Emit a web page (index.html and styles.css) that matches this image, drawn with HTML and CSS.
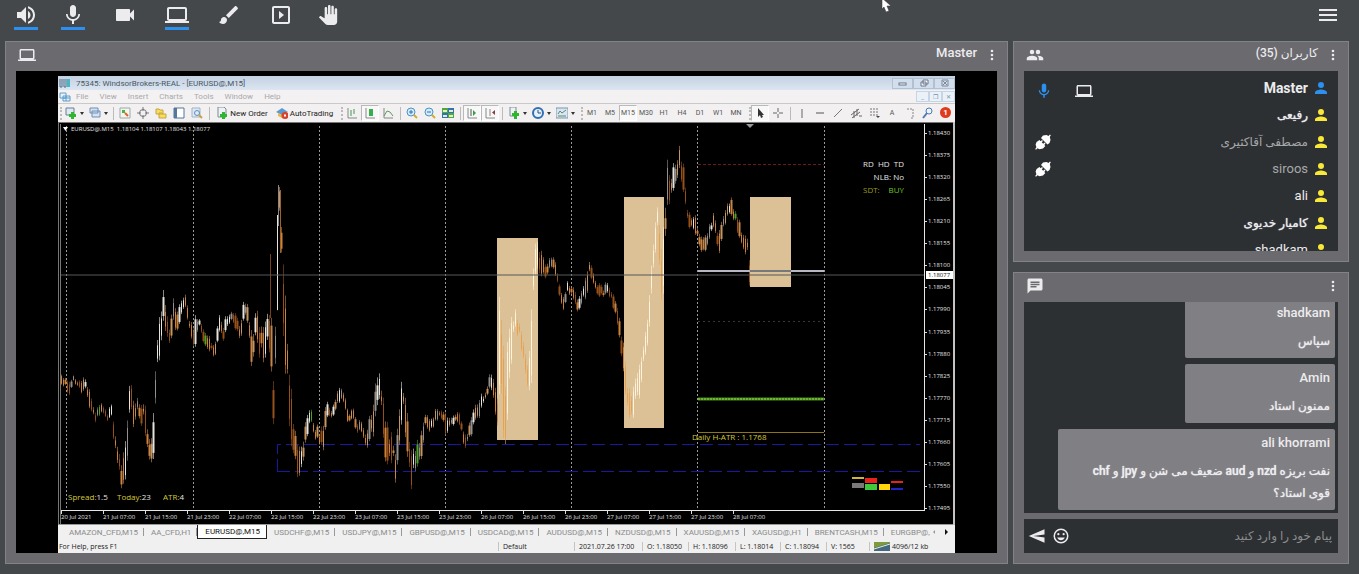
FILE: index.html
```html
<!DOCTYPE html>
<html lang="fa">
<head>
<meta charset="utf-8">
<meta name="viewport" content="width=device-width, initial-scale=1.0">
<title>کلاس آنلاین</title>
<link rel="stylesheet" href="styles.css">
</head>
<body>

<svg class="sprite" aria-hidden="true">
  <symbol id="i-volume" viewBox="0 0 24 24"><path d="M3 9v6h4l5 5V4L7 9H3zm13.500 3c0-1.770-1.020-3.290-2.500-4.030v8.050c1.480-.73 2.500-2.250 2.500-4.020zM14 3.230v2.060c2.890.86 5 3.540 5 6.710s-2.110 5.850-5 6.710v2.060c4.010-.91 7-4.490 7-8.770s-2.990-7.860-7-8.770z"/></symbol>
  <symbol id="i-mic" viewBox="0 0 24 24"><path d="M12 14c1.660 0 3-1.340 3-3V5c0-1.660-1.340-3-3-3S9 3.340 9 5v6c0 1.660 1.340 3 3 3zm5.300-3c0 3-2.540 5.100-5.300 5.100S6.700 14 6.700 11H5c0 3.410 2.720 6.230 6 6.720V21h2v-3.280c3.280-.48 6-3.300 6-6.720h-1.700z"/></symbol>
  <symbol id="i-camera" viewBox="0 0 24 24"><path d="M17 10.500V7c0-.55-.45-1-1-1H4c-.55 0-1 .45-1 1v10c0 .55.45 1 1 1h12c.55 0 1-.45 1-1v-3.500l4 4v-11l-4 4z"/></symbol>
  <symbol id="i-laptop" viewBox="0 0 24 24"><path d="M20 18c1.100 0 2-.9 2-2V6c0-1.100-.9-2-2-2H4c-1.100 0-2 .9-2 2v10c0 1.100.9 2 2 2H0v2h24v-2h-4zM4 6h16v10H4V6z"/></symbol>
  <symbol id="i-brush" viewBox="0 0 24 24"><path d="M7 14c-1.660 0-3 1.340-3 3 0 1.310-1.160 2-2 2 .92 1.220 2.490 2 4 2 2.210 0 4-1.790 4-4 0-1.660-1.340-3-3-3zm13.710-9.370l-1.340-1.340c-.39-.39-1.020-.39-1.410 0L9 12.250 11.750 15l8.960-8.960c.39-.39.39-1.020 0-1.410z"/></symbol>
  <symbol id="i-play" viewBox="0 0 24 24"><path d="M10 8v8l5-4-5-4zm9-5H5c-1.100 0-2 .9-2 2v14c0 1.100.9 2 2 2h14c1.100 0 2-.9 2-2V5c0-1.100-.9-2-2-2zm0 16H5V5h14v14z"/></symbol>
  <symbol id="i-hand" viewBox="0 0 24 24"><path d="M23 5.500V20c0 2.200-1.800 4-4 4h-7.300c-1.080 0-2.100-.43-2.850-1.190L1 14.830s1.260-1.230 1.300-1.250c.22-.19.49-.29.79-.29.22 0 .42.06.6.16.04.01 4.310 2.460 4.310 2.460V4c0-.83.67-1.500 1.500-1.500S11 3.170 11 4v7h1V1.500c0-.83.67-1.500 1.500-1.500S15 .67 15 1.500V11h1V2.500c0-.83.67-1.500 1.500-1.500s1.500.67 1.500 1.500V11h1V5.500c0-.83.67-1.500 1.500-1.500s1.500.67 1.500 1.500z"/></symbol>
  <symbol id="i-menu" viewBox="0 0 24 24"><path d="M3 18h18v-2H3v2zm0-5h18v-2H3v2zm0-7v2h18V6H3z"/></symbol>
  <symbol id="i-more" viewBox="0 0 24 24"><path d="M12 8a2 2 0 1 0 0-4 2 2 0 0 0 0 4zm0 2a2 2 0 1 0 0 4 2 2 0 0 0 0-4zm0 6a2 2 0 1 0 0 4 2 2 0 0 0 0-4z"/></symbol>
  <symbol id="i-people" viewBox="0 0 24 24"><path d="M16 11a3 3 0 1 0 0-6 3 3 0 0 0 0 6zM8 11a3 3 0 1 0 0-6 3 3 0 0 0 0 6zm0 2c-2.330 0-7 1.170-7 3.500V19h14v-2.500c0-2.330-4.670-3.500-7-3.500zm8 0c-.29 0-.62.02-.97.05 1.160.84 1.970 1.970 1.970 3.450V19h6v-2.500c0-2.330-4.670-3.500-7-3.500z"/></symbol>
  <symbol id="i-chat" viewBox="0 0 24 24"><path d="M20 2H4c-1.100 0-2 .9-2 2v18l4-4h14c1.100 0 2-.9 2-2V4c0-1.100-.9-2-2-2zM6 9h12v2H6V9zm8 5H6v-2h8v2zm4-6H6V6h12v2z"/></symbol>
  <symbol id="i-person" viewBox="4 4 16 16"><path d="M12 12a4 4 0 1 0 0-8 4 4 0 0 0 0 8zm0 2c-2.670 0-8 1.340-8 4v2h16v-2c0-2.660-5.330-4-8-4z"/></symbol>
  <symbol id="i-send" viewBox="0 0 24 24"><path d="M22 21L1 12l21-9v7L7 12l15 2z"/></symbol>
  <symbol id="i-smile" viewBox="0 0 24 24"><path d="M12 2a10 10 0 1 0 0 20 10 10 0 0 0 0-20zm0 18a8 8 0 1 1 0-16 8 8 0 0 1 0 16zm3.500-9a1.500 1.500 0 1 0 0-3 1.500 1.500 0 0 0 0 3zm-7 0a1.500 1.500 0 1 0 0-3 1.500 1.500 0 0 0 0 3zm3.500 6.500c2.330 0 4.310-1.460 5.110-3.500H6.890c.8 2.040 2.780 3.500 5.110 3.500z"/></symbol>
  <symbol id="i-plug" viewBox="0 0 16 16"><path d="M6 4l2-2.500L11.500 1l2 1L15 .5l.8.8L14.800 3l.7 3-1 3-2 1.500zM4.500 6l1.200 1.200L7 6l1 1-1.300 1.300 1.500 1.500L9.500 8.500l1 1L9.300 11l1 1L8 14.500l-3.500.7-2-.9L1 15.700l-.8-.8 1.200-1.600-.8-2.800 1-2.500z"/></symbol>
</svg>

<header class="topbar">
  <div class="tools">
    <div class="pair">
      <button class="tool on" aria-label="صدا"><svg><use href="#i-volume"/></svg></button>
      <button class="tool on" aria-label="میکروفون"><svg><use href="#i-mic"/></svg></button>
    </div>
    <button class="tool" aria-label="دوربین"><svg><use href="#i-camera"/></svg></button>
    <button class="tool on" aria-label="اشتراک صفحه"><svg><use href="#i-laptop"/></svg></button>
    <button class="tool" aria-label="تخته"><svg><use href="#i-brush"/></svg></button>
    <div class="pair">
      <button class="tool" aria-label="پخش"><svg><use href="#i-play"/></svg></button>
      <button class="tool" aria-label="اجازه صحبت"><svg class="hand"><use href="#i-hand"/></svg></button>
    </div>
  </div>
  <button class="tool" aria-label="منو"><svg><use href="#i-menu"/></svg></button>
</header>

<main class="room">
  <section class="panel">
    <div class="panel-head">
      <svg class="head-icon"><use href="#i-laptop"/></svg>
      <h2>Master</h2>
      <button class="more" aria-label="گزینه‌ها"><svg><use href="#i-more"/></svg></button>
    </div>
    <div class="stage">
      <div class="mt" lang="en">
        <div class="mt-title">
          <svg class="mt-logo" viewBox="0 0 12 10"><path d="M1 1v8h2V1M5 1v8h2V1" fill="none" stroke="#4d6f86"/><path d="M8 1h3v8H8z" fill="#46b7c4"/></svg>
          <span>75345: WindsorBrokers-REAL - [EURUSD@,M15]</span>
          <div class="win-btns">
            <button aria-label="Minimize"><svg viewBox="0 0 12 8"><rect x="2" y="4" width="7" height="2" fill="#fff" stroke="#66758a"/></svg></button>
            <button aria-label="Restore"><svg viewBox="0 0 12 8"><path d="M5 1h5v4H5zM3 3h5v4H3z" fill="#fff" stroke="#66758a"/></svg></button>
            <button aria-label="Close"><svg viewBox="0 0 12 8"><path d="M3 1h6v6H3zM4 2l4 4M8 2L4 6" fill="none" stroke="#7d8898"/></svg></button>
          </div>
        </div>
        <div class="mt-menu">
          <svg class="mt-logo" viewBox="0 0 12 10"><path d="M1 1h6v5H1zM4 4h7v5H4zM4 6h7M7 4v5" fill="#e8f2fb" stroke="#5f9ccb"/></svg>
          <a href="#">File</a><a href="#">View</a><a href="#">Insert</a><a href="#">Charts</a><a href="#">Tools</a><a href="#">Window</a><a href="#">Help</a>
          <div class="doc-btns"><button aria-label="Minimize window">_</button><button aria-label="Restore window">❐</button><button aria-label="Close window">✕</button></div>
        </div>
        <div class="mt-bar">
          <i class="grip"></i>
          <button class="tb drop" aria-label="New chart"><svg viewBox="0 0 12 12"><path d="M1 1h8v7H1z" fill="#dfe9f2" stroke="#6a8099"/><path d="M6 5h3v2h2v3H9v2H6v-2H4V7h2z" fill="#2fb52f"/></svg></button>
          <button class="tb drop" aria-label="Profiles"><svg viewBox="0 0 12 12"><path d="M1 1h8v5H1zM3 4h8v6H3z" fill="#d5e3f1" stroke="#6f8fb5"/></svg></button>
          <i class="sep"></i>
          <button class="tb" aria-label="Market watch"><svg viewBox="0 0 12 12"><path d="M1 1h10v10H1z" fill="#f4f6e8" stroke="#9aa7b5"/><path d="M3 3h3v3H3z" fill="#4caf50"/><path d="M6 6l3 3" stroke="#e2622a" stroke-width="2"/></svg></button>
          <button class="tb" aria-label="Data window"><svg viewBox="0 0 12 12"><circle cx="6" cy="6" r="3.500" fill="none" stroke="#777"/><path d="M6 0v4M6 8v4M0 6h4M8 6h4" stroke="#777"/></svg></button>
          <button class="tb" aria-label="Navigator"><svg viewBox="0 0 12 12"><path d="M1 2h3l1 1h3v4H1zM4 6h3l1 1h3v4H4z" fill="#f6dc60" stroke="#c9a63c"/></svg></button>
          <button class="tb" aria-label="Terminal"><svg viewBox="0 0 12 12"><path d="M1 1h10v10H1z" fill="#fff" stroke="#55779c"/><path d="M1 1h3v10H1z" fill="#55779c"/></svg></button>
          <button class="tb" aria-label="Strategy tester"><svg viewBox="0 0 12 12"><path d="M1 1h8v9H1z" fill="#dfe8f1" stroke="#9eb3c9"/><circle cx="6" cy="6" r="2.500" fill="none" stroke="#5b8fc4"/><path d="M8 8l3 3" stroke="#caa23a" stroke-width="2"/></svg></button>
          <i class="sep"></i>
          <button class="tb label order"><svg viewBox="0 0 12 12"><path d="M2 0h6l2 2v8H2z" fill="#eef2f5" stroke="#7d8b98"/><path d="M6 5h3v2h2v3H9v2H6v-2H4V7h2z" fill="#2fb52f"/></svg>New Order</button>
          <button class="tb label auto"><svg viewBox="0 0 12 12"><path d="M0 5l6-4 6 4-6 3z" fill="#5c9ad2"/><path d="M2 6l4 2v3L2 9z" fill="#e8b94a"/><circle cx="9" cy="8.500" r="3.500" fill="#d8432b"/><path d="M8 7.500h2v2H8z" fill="#fff"/></svg>AutoTrading</button>
          <i class="grip"></i>
          <button class="tb" aria-label="Bar chart"><svg viewBox="0 0 12 12"><path d="M2 1v10h9" fill="none" stroke="#888"/><path d="M5 3v6M8 2v5" stroke="#3a9a50"/></svg></button>
          <button class="tb pressed" aria-label="Candlesticks"><svg viewBox="0 0 12 12"><path d="M2 1v10h9" fill="none" stroke="#888"/><path d="M5 2h4v7H5z" fill="#35b04a"/></svg></button>
          <button class="tb" aria-label="Line chart"><svg viewBox="0 0 12 12"><path d="M2 1v10h9" fill="none" stroke="#888"/><path d="M2 9l3-5 3 1 3 4" fill="none" stroke="#5a9a60"/></svg></button>
          <i class="sep"></i>
          <button class="tb" aria-label="Zoom in"><svg viewBox="0 0 12 12"><circle cx="5" cy="5" r="4" fill="#d4ebfa" stroke="#4a93c9"/><path d="M3 5h4M5 3v4" stroke="#2c72ad"/><path d="M8 8l3 3" stroke="#d6aa38" stroke-width="2"/></svg></button>
          <button class="tb" aria-label="Zoom out"><svg viewBox="0 0 12 12"><circle cx="5" cy="5" r="4" fill="#d4ebfa" stroke="#4a93c9"/><path d="M3 5h4" stroke="#2c72ad"/><path d="M8 8l3 3" stroke="#d6aa38" stroke-width="2"/></svg></button>
          <button class="tb" aria-label="Tile windows"><svg viewBox="0 0 12 12"><path d="M0 1h6v5H0zM6 6h6v5H6z" fill="#4fa83d"/><path d="M6 1h6v5H6zM0 6h6v5H0z" fill="#3470b5"/><path d="M1 3h4v2H1zM7 3h4v2H7zM1 8h4v2H1zM7 8h4v2H7z" fill="#e6edc9"/></svg></button>
          <i class="sep"></i>
          <button class="tb pressed" aria-label="Auto scroll"><svg viewBox="0 0 12 12"><path d="M2 1v10h9" fill="none" stroke="#888"/><path d="M5 2v7" stroke="#555"/><path d="M7 3l3 3-3 3z" fill="#35a04a"/></svg></button>
          <button class="tb pressed" aria-label="Chart shift"><svg viewBox="0 0 12 12"><path d="M2 1v10h9M6 2v7" fill="none" stroke="#888"/><path d="M11 3L8 5.500 11 8z" fill="#8a4040"/></svg></button>
          <i class="sep"></i>
          <button class="tb drop" aria-label="Indicators"><svg viewBox="0 0 12 12"><path d="M2 0h6v9H2z" fill="#eef2f5" stroke="#7d8b98"/><path d="M6 4h3v2h2v3H9v3H6V9H4V6h2z" fill="#2fb52f"/></svg></button>
          <button class="tb drop" aria-label="Periods"><svg viewBox="0 0 12 12"><circle cx="6" cy="6" r="5" fill="#e4f1fb" stroke="#2f6fb3" stroke-width="2"/><path d="M6 3v3h3" fill="none" stroke="#2f4f73"/></svg></button>
          <button class="tb drop" aria-label="Templates"><svg viewBox="0 0 12 12"><path d="M0 1h12v10H0z" fill="#d9e6f2" stroke="#7a95b3"/><path d="M2 7l2-3 2 2 4-3M2 9h8" fill="none" stroke="#5c8a6c"/></svg></button>
          <i class="grip"></i>
          <button class="tb tf">M1</button>
          <button class="tb tf">M5</button>
          <button class="tb tf pressed">M15</button>
          <button class="tb tf">M30</button>
          <button class="tb tf">H1</button>
          <button class="tb tf">H4</button>
          <button class="tb tf">D1</button>
          <button class="tb tf">W1</button>
          <button class="tb tf">MN</button>
          <i class="grip"></i>
          <button class="tb pressed" aria-label="Cursor"><svg viewBox="0 0 12 12"><path d="M4 1v9l2-2 1 3 2-1-1-2h2z" fill="#333"/></svg></button>
          <button class="tb" aria-label="Crosshair"><svg viewBox="0 0 12 12"><path d="M6 1v4M6 7v4M1 6h4M7 6h4" stroke="#666"/></svg></button>
          <i class="sep"></i>
          <button class="tb" aria-label="Vertical line"><svg viewBox="0 0 12 12"><path d="M6 2v9" stroke="#666"/></svg></button>
          <button class="tb" aria-label="Horizontal line"><svg viewBox="0 0 12 12"><path d="M2 6h8" stroke="#555"/></svg></button>
          <button class="tb" aria-label="Trendline"><svg viewBox="0 0 12 12"><path d="M2 10l8-8" stroke="#777"/></svg></button>
          <button class="tb" aria-label="Channel"><svg viewBox="0 0 12 12"><path d="M1 8l8-6M2 11l8-6M4 4v7M7 2v7M9 9h3" stroke="#666"/></svg></button>
          <button class="tb" aria-label="Fibonacci"><svg viewBox="0 0 12 12"><path d="M2 2h9M2 5h9M2 8h9" stroke="#777" stroke-dasharray="2 1"/><path d="M8 9h4l-2 2z" fill="#444"/></svg></button>
          <button class="tb tf">A</button>
          <button class="tb" aria-label="Text label"><svg viewBox="0 0 12 12"><path d="M3 2h6v9H6" fill="none" stroke="#888" stroke-dasharray="2 1"/></svg></button>
          <button class="tb" aria-label="Search"><svg viewBox="0 0 12 12"><circle cx="7" cy="4" r="3" fill="#eef4fb" stroke="#4a78b8"/><path d="M5 6l-4 5" stroke="#4a78b8" stroke-width="2"/></svg></button>
          <span class="alert">1</span>
        </div>

        <svg class="chart" id="chart" viewBox="58 122 897 403">
          <rect x="58" y="122" width="897" height="403" fill="#000"/>
          <path d="M58 122.500H955M58.500 122V525M60.500 124V525" stroke="#777" fill="none"/>
          <path d="M58 524.500H955" stroke="#999"/>
          <path d="M954 122V525" stroke="#c4c4c4" stroke-width="2"/>
          <g class="vgrid"><path d="M66.500 126V510M193.500 126V510M319.500 126V510M445.500 126V510M571.500 126V510M697.500 126V510M824.500 126V510"/></g>
          <g class="zones">
            <rect x="497" y="238" width="41" height="202"/>
            <rect x="624" y="197" width="40" height="231"/>
            <rect x="750" y="197" width="41" height="90"/>
          </g>
          <path d="M277.500 472V444.500H920" fill="none" stroke="#1818a0" stroke-dasharray="13 5"/>
          <path d="M277 471.500H920" stroke="#1818a0" stroke-dasharray="13 5"/>
          <g id="candles"></g>
          <path d="M698 164.500H824" stroke="#6a1a1a" stroke-dasharray="3 2"/>
          <path d="M698 321.500H824" stroke="#3a3530" stroke-dasharray="2 3"/>
          <path d="M61 275H925" stroke="#55585a"/>
          <path d="M698 271H824" stroke="#b9b6c4" stroke-width="2"/>
          <path d="M750 271H791" stroke="#77777e" stroke-width="2"/>
          <path d="M698 399H824" stroke="#3f8a18" stroke-width="3"/>
          <path d="M698 399H824" stroke="#a5d858" stroke-dasharray="2 1"/>
          <path d="M698 432.500H824" stroke="#8c7614"/>
          <path d="M61 510.500H925M924.500 124V511" stroke="#e6e6e6" fill="none"/>
          <path d="M746 124h8l-4 4z" fill="#999"/>
          <path d="M63 127h5l-2.500 4z" fill="#fff"/>
          <text class="caption" x="71" y="131">EURUSD@.M15&#160; 1.18104 1.18107 1.18043 1.18077</text>
          <text class="note yellow" x="692" y="440">Daily H-ATR : 1.1768</text>
          <text class="note" x="904" y="167" text-anchor="end">RD&#160; HD&#160; TD</text>
          <text class="note" x="904" y="180" text-anchor="end">NLB: No</text>
          <text class="note olive" x="863" y="193">SDT:</text>
          <text class="note green" x="904" y="193" text-anchor="end">BUY</text>
          <text class="note" x="68" y="500"><tspan class="yellow">Spread:</tspan>1.5</text>
          <text class="note" x="117" y="500"><tspan class="yellow">Today:</tspan>23</text>
          <text class="note" x="163" y="500"><tspan class="yellow">ATR:</tspan>4</text>
          <g id="prices"></g>
          <g id="dates"></g>
          <rect x="926" y="271" width="27" height="8" fill="#fff"/>
          <text class="scale now" x="928" y="277">1.18077</text>
          <path d="M852 477h12v2h-12z" fill="#cdb53a"/>
          <path d="M852 483h12v5h-12z" fill="#7b777b"/>
          <path d="M865 478h12v5h-12zM891 481h12v2h-12z" fill="#e8231c"/>
          <path d="M865 484h12v6h-12z" fill="#3fc93c"/>
          <path d="M879 484h11v6h-11z" fill="#ffd60a"/>
          <path d="M891 488h12v2h-12z" fill="#2222cc"/>
        </svg>

        <nav class="mt-tabs">
          <button>AMAZON_CFD,M15</button>
          <button>AA_CFD,H1</button>
          <button class="active">EURUSD@,M15</button>
          <button>USDCHF@,M15</button>
          <button>USDJPY@,M15</button>
          <button>GBPUSD@,M15</button>
          <button>USDCAD@,M15</button>
          <button>AUDUSD@,M15</button>
          <button>NZDUSD@,M15</button>
          <button>XAUUSD@,M15</button>
          <button>XAGUSD@,H1</button>
          <button>BRENTCASH,M15</button>
          <button class="last">EURGBP@,</button>
          <span class="scroll"><svg viewBox="0 0 20 6"><path d="M4 1v4L2 3z" fill="#999"/><path d="M14 0v6l3-3z" fill="#111"/></svg></span>
        </nav>
        <footer class="mt-status">
          <span>For Help, press F1</span>
          <span>Default</span>
          <span>2021.07.26 17:00</span>
          <span>O: 1.18050</span>
          <span>H: 1.18096</span>
          <span>L: 1.18014</span>
          <span>C: 1.18094</span>
          <span>V: 1565</span>
          <span class="traffic"><svg viewBox="0 0 16 9"><path d="M0 0h16v9H0z" fill="#7d9a3f"/><path d="M0 9V6l16-5v8z" fill="#44687f"/><path d="M0 7l16-5" stroke="#e8efe0"/></svg>4096/12 kb</span>
        </footer>
      </div>
    </div>
  </section>

  <aside class="side">
    <section class="panel">
      <div class="panel-head">
        <svg class="head-icon"><use href="#i-people"/></svg>
        <h2 class="fa" dir="rtl">کاربران (35)</h2>
        <button class="more" aria-label="گزینه‌ها"><svg><use href="#i-more"/></svg></button>
      </div>
      <ul class="users">
        <li class="host"><svg class="mic"><use href="#i-mic"/></svg><svg class="share"><use href="#i-laptop"/></svg><b>Master</b><svg class="who"><use href="#i-person"/></svg></li>
        <li><span class="fa strong">رفیعی</span><svg class="who"><use href="#i-person"/></svg></li>
        <li class="off"><svg class="plug"><use href="#i-plug"/></svg><span class="fa">مصطفی آقاکثیری</span><svg class="who"><use href="#i-person"/></svg></li>
        <li class="off"><svg class="plug"><use href="#i-plug"/></svg><span>siroos</span><svg class="who"><use href="#i-person"/></svg></li>
        <li><span>ali</span><svg class="who"><use href="#i-person"/></svg></li>
        <li><span class="fa strong">کامیار خدیوی</span><svg class="who"><use href="#i-person"/></svg></li>
        <li><span>shadkam</span><svg class="who"><use href="#i-person"/></svg></li>
      </ul>
    </section>

    <section class="panel chat">
      <div class="panel-head">
        <svg class="head-icon"><use href="#i-chat"/></svg>
        <button class="more" aria-label="گزینه‌ها"><svg><use href="#i-more"/></svg></button>
      </div>
      <div class="messages">
        <article><h3>shadkam</h3><p>سپاس</p></article>
        <article><h3>Amin</h3><p>ممنون استاد</p></article>
        <article><h3>ali khorrami</h3><p>نفت بریزه nzd و aud ضعیف می شن و jpy و chf قوی استاد؟</p></article>
      </div>
      <form class="compose">
        <button type="button" aria-label="ارسال"><svg><use href="#i-send"/></svg></button>
        <button type="button" aria-label="شکلک"><svg><use href="#i-smile"/></svg></button>
        <input type="text" dir="rtl" aria-label="پیام" placeholder="پیام خود را وارد کنید">
      </form>
    </section>
  </aside>
</main>

<svg class="pointer" viewBox="0 0 10 14" aria-hidden="true"><path d="M1 0v11l2-2 2 5 3-1-2-5h4z" fill="#fff" stroke="#333" stroke-width=".5"/></svg>

<script src="script.js"></script>
</body>
</html>
```
FILE: styles.css
```css
:root {
  --bg: #45484b;
  --panel: #6b6a6f;
  --line: #828388;
  --dark: #2d3033;
  --bubble: #807f84;
  --text: #ececee;
  --blue: #2b90f0;
  --yellow: #f8e837;
}
* {
  box-sizing: border-box;
}
body {
  margin: 0;
  height: 100vh;
  display: flex;
  flex-direction: column;
  overflow: hidden;
  background: var(--bg);
  color: var(--text);
  font-family: Roboto, "DejaVu Sans", sans-serif;
  font-size: 13px;
}
button {
  border: 0;
  padding: 0;
  background: none;
  color: inherit;
  font: inherit;
  cursor: pointer;
}
svg {
  display: block;
  flex-shrink: 0;
  fill: currentColor;
}
.sprite {
  display: none;
}

/* top bar */
.topbar {
  display: flex;
  justify-content: space-between;
  height: 41px;
  padding: 3px 19px 0 14px;
}
.tools {
  display: flex;
  gap: 28px;
}
.pair {
  display: flex;
  gap: 23px;
}
.tool {
  width: 24px;
  height: 27px;
  border-bottom: 3px solid transparent;
}
.tool.on {
  border-color: var(--blue);
}
.tool svg {
  width: 24px;
  height: 24px;
}
.tool svg.hand {
  padding: 2px;
}

/* panels */
.room {
  flex: 1;
  min-height: 0;
  display: grid;
  grid-template-columns: minmax(0, 1fr) 336px;
  gap: 5px;
  padding: 0 10px 10px 5px;
}
.panel {
  display: flex;
  flex-direction: column;
  padding: 0 10px 10px;
  background: var(--panel);
  border: 1px solid var(--line);
}
.panel-head {
  display: flex;
  align-items: center;
  height: 29px;
  padding-bottom: 4px;
  flex-shrink: 0;
}
.head-icon {
  width: 18px;
  height: 18px;
  margin: 0 auto 0 2px;
}
.panel-head h2 {
  margin: 0 7px 4px 0;
  font-size: 13px;
  font-weight: 500;
}
.more svg {
  width: 16px;
  height: 16px;
  margin-right: -3px;
}
.fa,
.panel-head .fa {
  font-size: 12px;
}
.strong {
  text-shadow: 0 0 1px currentColor;
}
.side {
  display: flex;
  flex-direction: column;
  gap: 10px;
  min-height: 0;
}
.users {
  height: 180px;
  margin: 0;
  padding: 3px 11px 0;
  overflow: hidden;
  list-style: none;
  background: var(--dark);
}
.users li {
  display: flex;
  align-items: center;
  justify-content: flex-end;
  height: 27px;
}
.users b {
  font-size: 14px;
}
.users .who {
  width: 12px;
  height: 12px;
  margin-left: 7px;
  color: var(--yellow);
}
.users .host .who,
.mic {
  color: var(--blue);
}
.users .mic,
.users .share {
  width: 18px;
  height: 18px;
  margin-top: 6px;
}
.users .share {
  margin-left: 22px;
  margin-right: auto;
}
.users .plug {
  width: 16px;
  height: 16px;
  margin-right: auto;
  color: #fff;
}
.off span {
  color: #a7a8aa;
}

/* chat */
.chat {
  flex: 1;
  min-height: 0;
}
.messages {
  flex: 1;
  min-height: 0;
  display: flex;
  flex-direction: column;
  justify-content: flex-end;
  align-items: flex-end;
  gap: 6px;
  padding: 0 3px 3px;
  overflow: hidden;
  background: var(--dark);
}
.messages article {
  flex-shrink: 0;
  min-width: 150px;
  max-width: 90%;
  padding: 3px 5px 6px;
  border-radius: 2px;
  background: var(--bubble);
  direction: rtl;
  line-height: 22px;
}
.messages h3,
.messages p {
  margin: 0;
  font-size: 13px;
  font-weight: 500;
}
.messages p {
  margin-top: 6px;
  padding-left: 20px;
  font-size: 12px;
  text-shadow: 0 0 1px currentColor;
}
.compose {
  display: flex;
  align-items: center;
  gap: 6px;
  height: 34px;
  margin-top: 6px;
  padding: 0 6px 0 4px;
  background: var(--dark);
}
.compose svg {
  width: 18px;
  height: 18px;
}
.compose input {
  flex: 1;
  min-width: 0;
  border: 0;
  padding: 0;
  outline: none;
  background: none;
  color: var(--text);
  font: inherit;
  font-size: 12px;
}
.compose input::placeholder {
  color: #8a8c8e;
}

/* shared screen */
.stage {
  flex: 1;
  min-height: 0;
  padding: 5px 42px 0;
  overflow: hidden;
  background: #000;
}
.mt {
  background: #f0f0f0;
  color: #222;
  font-family: Roboto, sans-serif;
  font-size: 8px;
}
.mt-title,
.mt-menu,
.mt-bar,
.mt-tabs,
.mt-status {
  display: flex;
  align-items: center;
  overflow: hidden;
  white-space: nowrap;
}
.mt-title {
  height: 14px;
  background: linear-gradient(#c3d1e2, #dce6f1);
  color: #4a5665;
}
.mt-logo {
  width: 12px;
  height: 10px;
  margin: 0 5px 0 1px;
}
.win-btns,
.doc-btns {
  display: flex;
  margin-left: auto;
}
.win-btns button {
  width: 21px;
  height: 11px;
  border: 1px solid #b3c0d2;
  background: #d3deec;
}
.win-btns svg {
  width: 12px;
  height: 8px;
  margin: auto;
}
.mt-menu {
  height: 13px;
  background: #f3f1f2;
  color: #a9a9ab;
}
.mt-menu a {
  margin-right: 11px;
  color: inherit;
  text-decoration: none;
}
.doc-btns button {
  width: 13px;
  height: 11px;
  border: 1px solid #c5d5e6;
  background: #eaf1f8;
  color: #7890a8;
  font-size: 6px;
  line-height: 8px;
}
.mt-bar {
  height: 19px;
  border-top: 1px solid #c9c9c9;
  background: #f2f0f0;
}
.grip {
  width: 6px;
  height: 13px;
  flex-shrink: 0;
  border-right: 2px dotted #bbb;
}
.grip:first-child {
  width: 4px;
}
.sep {
  width: 6px;
  height: 13px;
  flex-shrink: 0;
  background: linear-gradient(#bbb, #bbb) center / 1px 100% no-repeat;
}
.tb {
  width: 18px;
  height: 16px;
  flex-shrink: 0;
  display: flex;
  align-items: center;
  justify-content: center;
}
.tb svg {
  width: 12px;
  height: 12px;
}
.tb.pressed {
  border: 1px solid #b9b9b9;
  border-right-color: #fff;
  border-bottom-color: #fff;
  background: #f8f8f8;
}
.tb.drop {
  width: 24px;
  gap: 3px;
}
.tb.drop::after {
  content: "";
  border: 2px solid transparent;
  border-top: 3px solid #333;
  border-bottom: 0;
}
.tb.label {
  gap: 2px;
}
.tb.order {
  width: 60px;
}
.tb.auto {
  width: 65px;
}
.tf {
  color: #555;
  font-size: 7px;
}
.alert {
  width: 11px;
  height: 11px;
  margin: 0 4px 2px auto;
  border-radius: 50%;
  background: #e03a1e;
  color: #fff;
  font-size: 8px;
  font-weight: 700;
  line-height: 11px;
  text-align: center;
}
.chart {
  width: 100%;
  height: auto;
  font-family: "Open Sans", sans-serif;
}
.vgrid path {
  stroke: #9a9a9a;
  stroke-dasharray: 2 2;
}
.zones rect {
  fill: #dcc096;
}
.chart text {
  fill: #e4e4e4;
}
.chart .caption,
.chart .scale {
  font-size: 6px;
}
.chart .note {
  font-size: 8px;
}
.chart .now {
  fill: #111;
}
.chart .yellow {
  fill: #d6c936;
}
.chart .olive {
  fill: #9c9c1c;
}
.chart .green {
  fill: #6cc626;
}
.mt-tabs {
  height: 14px;
  padding-left: 4px;
  align-items: stretch;
  color: #8b8b8b;
}
.mt-tabs button {
  flex-shrink: 0;
  padding: 0 6px 0 7px;
  background: linear-gradient(#999, #999) right center / 1px 8px no-repeat;
}
.mt-tabs button.active {
  border: 1px solid #222;
  border-top: 0;
  background: #fff;
  color: #111;
}
.mt-tabs button.last {
  padding-right: 0;
  background: none;
}
.scroll {
  margin: auto 4px auto auto;
}
.scroll svg {
  width: 20px;
  height: 6px;
}
.mt-status {
  display: grid;
  grid-template-columns: minmax(0, 1fr) 76px 68px 46px 47px 45px 46px 43px 86px;
  height: 14px;
  font-family: "Open Sans", sans-serif;
  font-size: 7px;
}
.mt-status span {
  padding-left: 4px;
  border-left: 1px solid #c4c4c4;
}
.mt-status span:first-child {
  padding-left: 1px;
  border: 0;
}
.traffic {
  display: flex;
  align-items: center;
  gap: 2px;
}
.traffic svg {
  width: 16px;
  height: 9px;
}

.pointer {
  position: absolute;
  top: -2px;
  left: 881px;
  width: 10px;
  height: 14px;
}
```
FILE: script.js
```js
const NS = "http://www.w3.org/2000/svg";

// x, high, low
const track = [
  [61, 375, 385], [65, 376, 388], [69, 380, 397], [73, 376, 381], [77, 378, 390], [81, 380, 394], [85, 375, 393],
  [90, 392, 410], [95, 408, 427], [100, 401, 413], [107, 412, 423], [111, 404, 415], [114, 425, 450], [118, 440, 473],
  [121, 455, 493], [124, 455, 495], [127, 420, 470], [129, 378, 412], [131, 387, 410], [134, 400, 435], [137, 393, 415],
  [141, 405, 430], [143, 395, 425], [146, 415, 445], [149, 430, 468], [152, 423, 460], [154, 370, 455], [156, 345, 375],
  [159, 320, 365], [163, 283, 330], [166, 300, 345], [169, 325, 347], [173, 298, 330], [177, 310, 330], [181, 300, 318],
  [184, 288, 305], [187, 302, 320], [190, 322, 340], [194, 318, 350], [199, 317, 327], [203, 325, 342], [210, 335, 355],
  [214, 345, 360], [219, 313, 330], [223, 322, 345], [229, 310, 325], [232, 308, 320], [240, 320, 345], [243, 302, 322],
  [247, 300, 322], [250, 322, 345], [252, 330, 392], [254, 308, 335], [258, 310, 350], [262, 322, 365], [268, 312, 345],
  [271, 318, 370], [273, 365, 425], [275, 310, 370], [277, 215, 310], [279, 185, 215], [281, 215, 253], [283, 240, 370],
  [287, 330, 375], [290, 365, 450], [293, 420, 455], [297, 445, 478], [300, 450, 477], [303, 430, 470], [306, 415, 440],
  [310, 403, 418], [314, 428, 440], [318, 425, 440], [320, 430, 455], [323, 415, 450], [327, 403, 420], [332, 407, 420],
  [337, 390, 408], [341, 388, 400], [344, 394, 410], [348, 415, 425], [352, 404, 416], [356, 420, 435], [362, 420, 432],
  [366, 430, 457], [369, 418, 440], [372, 405, 445], [376, 370, 430], [379, 362, 400], [382, 385, 425], [385, 418, 460],
  [389, 430, 462], [393, 435, 466], [395, 450, 490], [398, 420, 465], [401, 385, 430], [403, 385, 410], [406, 400, 460],
  [410, 445, 488], [414, 445, 478], [418, 440, 472], [422, 425, 455], [425, 413, 430], [430, 420, 434], [436, 406, 420],
  [441, 407, 420], [445, 412, 435], [450, 413, 430], [455, 410, 425], [460, 413, 425], [464, 435, 456], [468, 425, 445],
  [473, 408, 430], [480, 395, 415], [486, 387, 402], [490, 370, 392], [494, 378, 405], [497, 395, 430], [499, 305, 400],
  [502, 340, 438], [505, 380, 440], [508, 330, 400], [511, 318, 360], [514, 308, 332], [519, 318, 338], [524, 338, 370],
  [528, 360, 390], [531, 310, 388], [533, 258, 300], [536, 240, 275], [539, 242, 282], [543, 258, 275], [547, 262, 281],
  [550, 254, 268], [555, 258, 275], [558, 278, 292], [563, 298, 312], [567, 280, 292], [572, 283, 302], [577, 294, 313],
  [582, 285, 301], [587, 272, 295], [589, 258, 278], [592, 268, 283], [597, 283, 296], [603, 285, 302], [608, 280, 296],
  [614, 296, 311], [619, 315, 338], [623, 340, 370], [626, 372, 408], [630, 395, 428], [634, 380, 412], [638, 368, 404],
  [643, 343, 368], [647, 318, 345], [650, 265, 320], [653, 230, 272], [657, 203, 235], [660, 235, 305], [663, 210, 290],
  [665, 190, 260], [667, 158, 212], [670, 172, 202], [674, 162, 190], [679, 143, 172], [683, 165, 190], [686, 198, 222],
  [690, 217, 232], [694, 214, 230], [699, 228, 250], [704, 236, 252], [709, 224, 242], [714, 212, 230], [718, 232, 256],
  [723, 213, 232], [730, 196, 212], [737, 214, 232], [742, 232, 248], [747, 230, 258], [749, 250, 286]
];

const up = ["#e6e2dc", "#94908f", "#c9955f"];
const down = ["#cf8236", "#96511b", "#c88445"];

// repeatable noise, so the chart does not change on reload
function noise(n) {
  const v = Math.sin(n * 12.9898) * 43758.5453;
  return v - Math.floor(v);
}

function add(parent, name, attrs, text) {
  const el = document.createElementNS(NS, name);
  for (const key in attrs) el.setAttribute(key, attrs[key]);
  if (text) el.textContent = text;
  parent.appendChild(el);
}

function drawCandles() {
  const g = document.getElementById("candles");
  let prev = 380;
  let seg = 0;
  for (let x = 61, i = 0; x < 750; x += 2, i++) {
    while (seg < track.length - 2 && track[seg + 1][0] <= x) seg++;
    const [x1, h1, l1] = track[seg];
    const [x2, h2, l2] = track[seg + 1];
    const t = Math.min(1, (x - x1) / (x2 - x1));
    const high = h1 + (h2 - h1) * t;
    const low = l1 + (l2 - l1) * t;
    const mid = (high + low) / 2;
    const range = low - high;
    const inZone = (x > 497 && x < 538) || (x > 624 && x < 664);
    let color = (mid < prev ? up : down)[Math.floor(noise(i) * 3)];
    if (inZone) color = mid < prev ? "#fff3dc" : "#e8a04c";
    if (i % 53 === 19 && !inZone) color = "#4fa32a";
    const top = high + range * (0.45 * noise(i + 400) - 0.1);
    const bottom = low - range * (0.45 * noise(i + 900) - 0.1);
    add(g, "path", { d: `M${x + 0.5} ${top}V${bottom}`, stroke: color, "stroke-opacity": 0.6 });
    add(g, "path", {
      d: `M${x + 0.5} ${top + range * 0.15}V${bottom - range * 0.1}`,
      stroke: color,
      "stroke-width": !inZone && noise(i + 50) > 0.7 ? 2 : 1
    });
    prev = mid;
  }
  add(g, "path", { d: "M270.5 254V318", stroke: "#7a4018" });
  add(g, "path", { d: "M277.5 215V310", stroke: "#e6e2dc" });
  add(g, "path", { d: "M278.5 185V226", stroke: "#88888c" });
  add(g, "path", { d: "M280.5 190V253", stroke: "#a0622a" });
}

function drawScales() {
  const prices = document.getElementById("prices");
  for (let i = 0; i < 18; i++) {
    const y = Math.round(133 + i * 22.06);
    add(prices, "path", { d: `M925 ${y + 0.5}h2`, stroke: "#ddd" });
    add(prices, "text", { class: "scale", x: 928, y: y + 2 }, (1.1843 - i * 0.00055).toFixed(5));
  }
  const dates = ["20 Jul 2021", "21 Jul 07:00", "21 Jul 15:00", "21 Jul 23:00", "22 Jul 07:00", "22 Jul 15:00",
    "22 Jul 23:00", "23 Jul 07:00", "23 Jul 15:00", "23 Jul 23:00", "26 Jul 07:00", "26 Jul 15:00",
    "26 Jul 23:00", "27 Jul 07:00", "27 Jul 15:00", "27 Jul 23:00", "28 Jul 07:00"];
  const g = document.getElementById("dates");
  dates.forEach((date, i) => {
    const x = 61 + i * 42;
    add(g, "path", { d: `M${x + 0.5} 511v3`, stroke: "#ddd" });
    add(g, "text", { class: "scale", x: x, y: 519 }, date);
  });
}

drawCandles();
drawScales();
```
